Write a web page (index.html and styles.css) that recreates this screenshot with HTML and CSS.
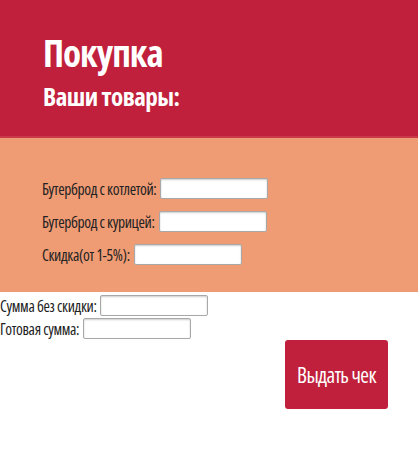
FILE: index.html
```html
<!DOCTYPE html>
<html lang="ru">
<head>
<meta charset="utf-8">
<title>Покупка</title>
<link rel="stylesheet" href="styles.css">
</head>
<body>
<header class="top">
  <h1 class="title">Покупка</h1>
  <h2 class="subtitle">Ваши товары:</h2>
</header>
<section class="goods">
  <div class="row"><label class="lbl">Бутерброд с котлетой:</label><input class="field" type="text"></div>
  <div class="row"><label class="lbl">Бутерброд с курицей:</label><input class="field" type="text"></div>
  <div class="row"><label class="lbl">Скидка(от 1-5%):</label><input class="field" type="text"></div>
</section>
<section class="totals">
  <div class="trow"><label class="lbl">Сумма без скидки:</label><input class="field" type="text"></div>
  <div class="trow"><label class="lbl">Готовая сумма:</label><input class="field" type="text"></div>
</section>
<div class="actions"><button class="btn" type="button">Выдать чек</button></div>
</body>
</html>
```
FILE: styles.css
```css
html, body {
  margin: 0;
  padding: 0;
  background: #fff;
}
body {
  font-family: "Open Sans", "DejaVu Sans Condensed", sans-serif;
  font-stretch: 75%;
  color: #222;
}
.top {
  background: #c0203c;
  height: 138px;
  border-bottom: 2px solid #c9394a;
  padding: 28px 0 0 43px;
  box-sizing: border-box;
  color: #fff;
}
.title {
  margin: 0;
  font-size: 37px;
  line-height: 50px;
  letter-spacing: -1px;
  font-weight: 700;
}
.subtitle {
  margin: 1px 0 0;
  font-size: 25px;
  line-height: 34px;
  letter-spacing: -0.5px;
  font-weight: 700;
}
.goods {
  background: #ef9b74;
  height: 154px;
  box-sizing: border-box;
  padding: 40px 0 0 42px;
  display: flex;
  flex-direction: column;
  gap: 12px;
}
.row, .trow {
  display: flex;
  align-items: center;
  gap: 4px;
  height: 21px;
}
.lbl {
  font-size: 15.5px;
  letter-spacing: -0.35px;
}
.field {
  width: 108px;
  height: 21px;
  box-sizing: border-box;
  border: 1px solid #a8a8a8;
  border-radius: 2px;
  box-shadow: inset 0 1px 2px rgba(0,0,0,0.2);
  background: #fff;
  margin: 0;
  padding: 0 3px;
}
.totals {
  padding-top: 3px;
  display: flex;
  flex-direction: column;
  gap: 2px;
}
.actions {
  padding: 1px 0 0 285px;
}
.btn {
  width: 103px;
  height: 69px;
  background: #c0203c;
  border: none;
  border-radius: 3px;
  color: #fff;
  font-family: inherit;
  font-stretch: inherit;
  font-size: 21px;
  letter-spacing: -0.6px;
  padding: 0;
  white-space: nowrap;
}
```
